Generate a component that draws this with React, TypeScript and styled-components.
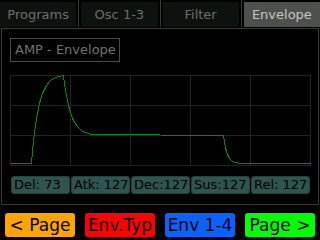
import React from 'react';
import styled, { createGlobalStyle } from 'styled-components';

const GlobalStyle = createGlobalStyle`
  html, body {
    margin: 0;
    padding: 0;
    background: #000;
  }
  body {
    font-family: "DejaVu Sans", "Liberation Sans", sans-serif;
  }
`;

const Screen = styled.div`
  width: 320px;
  height: 240px;
  background: #000;
  overflow: hidden;
  display: flex;
  flex-direction: column;
`;

const TabBar = styled.div`
  height: 28px;
  padding-top: 2px;
  box-sizing: border-box;
  display: flex;
  align-items: flex-start;
`;

const Tab = styled.div<{ $active?: boolean }>`
  flex: 1;
  height: 25px;
  line-height: 25px;
  text-align: center;
  font-size: 13px;
  background: ${(p) => (p.$active ? '#4c514c' : '#0c130e')};
  color: ${(p) => (p.$active ? '#c4c6c4' : '#6c6e6c')};
`;

const Sep = styled.div`
  width: 1px;
  height: 27px;
  margin: -2px 2px 0;
  background: #393939;
`;

const Panel = styled.div`
  margin-left: 1px;
  width: 318px;
  height: 177px;
  box-sizing: border-box;
  border: 1px solid #393939;
  padding: 9px 0 0 8px;
`;

const Label = styled.div`
  width: 110px;
  height: 24px;
  box-sizing: border-box;
  border: 1px solid #4a4a4a;
  padding-left: 4px;
  line-height: 22px;
  font-size: 13px;
  color: #727272;
`;

const Graph = styled.svg`
  display: block;
  margin-top: 13px;
`;

const ParamRow = styled.div`
  display: flex;
  gap: 1px;
  margin: 10px 0 0 1px;
`;

const Param = styled.div`
  width: 59px;
  height: 18px;
  box-sizing: border-box;
  border: 1px solid #22433e;
  border-radius: 3px;
  background: #2e5550;
  color: #000;
  font-size: 13px;
  line-height: 16px;
  padding-left: 2px;
  white-space: nowrap;
  overflow: hidden;
`;

const ButtonRow = styled.div`
  display: flex;
  justify-content: space-between;
  padding: 0 5px;
  margin-top: 8px;
`;

const SoftKey = styled.div<{ $bg: string }>`
  width: 70px;
  height: 24px;
  border-radius: 3px;
  background: ${(p) => p.$bg};
  color: #000;
  font-size: 17px;
  line-height: 24px;
  text-align: center;
  white-space: nowrap;
`;

const tabs = ['Programs', 'Osc 1-3', 'Filter', 'Envelope'];
const params = ['Del: 73', 'Atk: 127', 'Dec:127', 'Sus:127', 'Rel: 127'];
const keys = [
  { label: '< Page', bg: '#ffa500' },
  { label: 'Env.Typ', bg: '#ff0000' },
  { label: 'Env 1-4', bg: '#0a62ff' },
  { label: 'Page >', bg: '#00ff00' },
];

// envelope curve in graph-local pixels (300 x 90)
function envelopePath() {
  const pts: [number, number][] = [[0, 88]];
  const norm = 1 - Math.exp(-32 / 7.2);
  for (let x = 21; x <= 53; x++) {
    pts.push([x, 88 - (88 * (1 - Math.exp(-(x - 21) / 7.2))) / norm]);
  }
  for (let x = 54; x <= 85; x++) {
    pts.push([x, 60 - 60 * Math.exp(-(x - 53) / 7.3)]);
  }
  pts.push([213, 60]);
  for (let x = 214; x <= 230; x++) {
    pts.push([x, 60 + 28 * (1 - Math.exp(-(x - 213) / 3.5))]);
  }
  pts.push([230, 88], [300, 88]);
  return pts.map(([x, y]) => `${x + 0.5},${Math.round(y) + 0.5}`).join(' ');
}

const EnvelopeGraph = () => (
  <Graph width={301} height={91} viewBox="0 0 301 91" shapeRendering="crispEdges">
    {[0, 60, 120, 180, 240, 300].map((x) => (
      <line key={`v${x}`} x1={x + 0.5} y1={0} x2={x + 0.5} y2={91} stroke="#222" />
    ))}
    {[0, 30, 60, 90].map((y) => (
      <line key={`h${y}`} x1={0} y1={y + 0.5} x2={301} y2={y + 0.5} stroke="#222" />
    ))}
    <polyline points={envelopePath()} fill="none" stroke="#0f830f" strokeWidth={1} />
  </Graph>
);

export default function App() {
  return (
    <Screen>
      <GlobalStyle />
      <TabBar>
        {tabs.map((t, i) => (
          <React.Fragment key={t}>
            {i > 0 && <Sep />}
            <Tab $active={t === 'Envelope'}>{t}</Tab>
          </React.Fragment>
        ))}
      </TabBar>
      <Panel>
        <Label>AMP - Envelope</Label>
        <EnvelopeGraph />
        <ParamRow>
          {params.map((p) => (
            <Param key={p}>{p}</Param>
          ))}
        </ParamRow>
      </Panel>
      <ButtonRow>
        {keys.map((k) => (
          <SoftKey key={k.label} $bg={k.bg}>
            {k.label}
          </SoftKey>
        ))}
      </ButtonRow>
    </Screen>
  );
}
